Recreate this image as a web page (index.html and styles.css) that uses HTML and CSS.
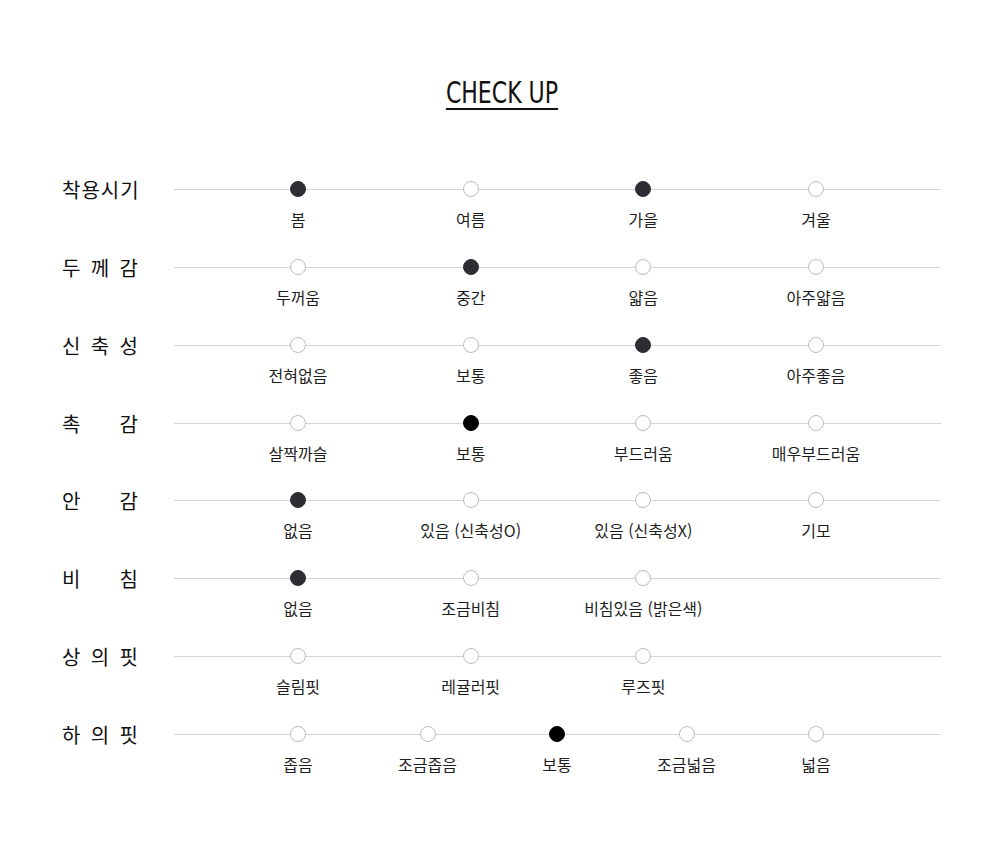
FILE: index.html
```html
<!DOCTYPE html>
<html lang="ko">
<head>
<meta charset="utf-8">
<title>CHECK UP</title>
<link rel="stylesheet" href="styles.css">
</head>
<body>
<main class="page">
  <h2 class="title"><span class="title-text">CHECK UP</span></h2>
  <ul class="rows">
    <li class="row">
      <span class="row-label tight">착용시기</span>
      <div class="track">
        <div class="opts">
          <div class="opt on"><i class="dot"></i><span class="opt-text">봄</span></div>
          <div class="opt"><i class="dot"></i><span class="opt-text">여름</span></div>
          <div class="opt on"><i class="dot"></i><span class="opt-text">가을</span></div>
          <div class="opt"><i class="dot"></i><span class="opt-text">겨울</span></div>
        </div>
      </div>
    </li>
    <li class="row">
      <span class="row-label">두 께 감</span>
      <div class="track">
        <div class="opts">
          <div class="opt"><i class="dot"></i><span class="opt-text">두꺼움</span></div>
          <div class="opt on"><i class="dot"></i><span class="opt-text">중간</span></div>
          <div class="opt"><i class="dot"></i><span class="opt-text">얇음</span></div>
          <div class="opt"><i class="dot"></i><span class="opt-text">아주얇음</span></div>
        </div>
      </div>
    </li>
    <li class="row">
      <span class="row-label">신 축 성</span>
      <div class="track">
        <div class="opts">
          <div class="opt"><i class="dot"></i><span class="opt-text">전혀없음</span></div>
          <div class="opt"><i class="dot"></i><span class="opt-text">보통</span></div>
          <div class="opt on"><i class="dot"></i><span class="opt-text">좋음</span></div>
          <div class="opt"><i class="dot"></i><span class="opt-text">아주좋음</span></div>
        </div>
      </div>
    </li>
    <li class="row">
      <span class="row-label">촉 감</span>
      <div class="track">
        <div class="opts">
          <div class="opt"><i class="dot"></i><span class="opt-text">살짝까슬</span></div>
          <div class="opt on black"><i class="dot"></i><span class="opt-text">보통</span></div>
          <div class="opt"><i class="dot"></i><span class="opt-text">부드러움</span></div>
          <div class="opt"><i class="dot"></i><span class="opt-text">매우부드러움</span></div>
        </div>
      </div>
    </li>
    <li class="row">
      <span class="row-label">안 감</span>
      <div class="track">
        <div class="opts">
          <div class="opt on"><i class="dot"></i><span class="opt-text">없음</span></div>
          <div class="opt"><i class="dot"></i><span class="opt-text">있음 (신축성O)</span></div>
          <div class="opt"><i class="dot"></i><span class="opt-text">있음 (신축성X)</span></div>
          <div class="opt"><i class="dot"></i><span class="opt-text">기모</span></div>
        </div>
      </div>
    </li>
    <li class="row">
      <span class="row-label">비 침</span>
      <div class="track">
        <div class="opts">
          <div class="opt on"><i class="dot"></i><span class="opt-text">없음</span></div>
          <div class="opt"><i class="dot"></i><span class="opt-text">조금비침</span></div>
          <div class="opt"><i class="dot"></i><span class="opt-text">비침있음 (밝은색)</span></div>
          <div class="opt empty"></div>
        </div>
      </div>
    </li>
    <li class="row">
      <span class="row-label">상 의 핏</span>
      <div class="track">
        <div class="opts">
          <div class="opt"><i class="dot"></i><span class="opt-text">슬림핏</span></div>
          <div class="opt"><i class="dot"></i><span class="opt-text">레귤러핏</span></div>
          <div class="opt"><i class="dot"></i><span class="opt-text">루즈핏</span></div>
          <div class="opt empty"></div>
        </div>
      </div>
    </li>
    <li class="row">
      <span class="row-label">하 의 핏</span>
      <div class="track">
        <div class="opts">
          <div class="opt"><i class="dot"></i><span class="opt-text">좁음</span></div>
          <div class="opt"><i class="dot"></i><span class="opt-text">조금좁음</span></div>
          <div class="opt on black"><i class="dot"></i><span class="opt-text">보통</span></div>
          <div class="opt"><i class="dot"></i><span class="opt-text">조금넓음</span></div>
          <div class="opt"><i class="dot"></i><span class="opt-text">넓음</span></div>
        </div>
      </div>
    </li>
  </ul>
</main>
</body>
</html>
```

FILE: styles.css
```css
* {
  box-sizing: border-box;
}

html, body {
  margin: 0;
  padding: 0;
  background: #ffffff;
}

body {
  font-family: "Noto Sans CJK KR", "Noto Sans", sans-serif;
  color: #222222;
}

.page {
  width: 1000px;
  padding: 0 59px 0 62px;
}

.title {
  margin: 77px 0 0;
  text-align: center;
  font-weight: normal;
  line-height: 31px;
}

.title-text {
  display: inline-block;
  font-family: "DejaVu Sans Condensed", "DejaVu Sans", sans-serif;
  font-size: 31px;
  letter-spacing: 0;
  color: #111111;
  border-bottom: 2px solid #111111;
  transform: scaleX(0.79);
  transform-origin: center;
}

.rows {
  list-style: none;
  margin: 71px 0 0;
  padding: 0;
  display: flex;
  flex-direction: column;
  gap: 29.86px;
}

.row {
  display: flex;
  align-items: flex-start;
  gap: 36px;
}

.row-label {
  flex: 0 0 76px;
  width: 76px;
  font-size: 20px;
  line-height: 16px;
  color: #111111;
  text-align: justify;
  text-align-last: justify;
  white-space: nowrap;
  padding-top: 1px;
}

.row-label.tight {
  letter-spacing: 1px;
  text-align: left;
  text-align-last: left;
}

.track {
  flex: 1;
  position: relative;
}

.track::before {
  content: "";
  position: absolute;
  left: 0;
  right: 0;
  top: 8px;
  height: 1px;
  background: #d4d4d4;
}

.opts {
  position: relative;
  display: flex;
  justify-content: space-between;
  padding: 0 65px 0 64px;
}

.opt {
  width: 120px;
  display: flex;
  flex-direction: column;
  align-items: center;
  gap: 12px;
}

.dot {
  display: block;
  width: 16px;
  height: 16px;
  border-radius: 50%;
  border: 1px solid #bcbcbc;
  background: #ffffff;
}

.opt.on .dot {
  background: #2d2e34;
  border-color: #2d2e34;
}

.opt.on.black .dot {
  background: #000000;
  border-color: #000000;
}

.opt-text {
  font-size: 16px;
  line-height: 20px;
  color: #1e1e1e;
  white-space: nowrap;
}
```
